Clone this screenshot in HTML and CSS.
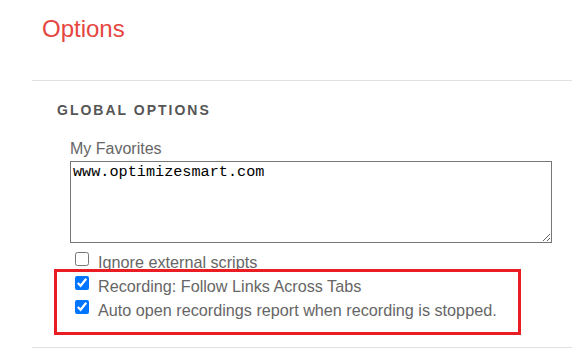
FILE: index.html
```html
<!DOCTYPE html>
<html>
<head>
<meta charset="utf-8">
<link rel="stylesheet" href="styles.css">
</head>
<body>
<div class="page">
  <h1 class="title">Options</h1>
  <div class="panel">
    <h2 class="section-title">GLOBAL OPTIONS</h2>
    <div class="field">
      <label class="field-label" for="fav">My Favorites</label>
      <textarea id="fav" class="favs">www.optimizesmart.com</textarea>
      <label class="check-row"><input type="checkbox" class="check"><span>Ignore external scripts</span></label>
      <label class="check-row"><input type="checkbox" class="check" checked><span>Recording: Follow Links Across Tabs</span></label>
      <label class="check-row"><input type="checkbox" class="check" checked><span>Auto open recordings report when recording is stopped.</span></label>
    </div>
  </div>
  <div class="highlight"></div>
</div>
</body>
</html>
```

FILE: styles.css
```css
html, body {
  margin: 0;
  padding: 0;
  background: #fff;
}

.page {
  position: relative;
  width: 572px;
  height: 364px;
  overflow: hidden;
  font-family: "Liberation Sans", Arial, sans-serif;
}

.title {
  margin: 0;
  padding: 15px 0 0 42px;
  font-size: 24px;
  line-height: 28px;
  font-weight: normal;
  color: #e5463f;
  height: 65px;
  box-sizing: content-box;
}

.panel {
  margin-left: 32px;
  border-top: 1px solid #e0e0e0;
  border-bottom: 1px solid #e0e0e0;
  padding: 21px 0 25px 25px;
}

.section-title {
  margin: 0;
  font-size: 14px;
  line-height: 16px;
  font-weight: bold;
  letter-spacing: 2px;
  color: #555;
}

.field {
  padding: 22px 0 0 13px;
  display: flex;
  flex-direction: column;
  align-items: flex-start;
}

.field-label {
  font-size: 16px;
  line-height: 18px;
  color: #666;
}

.favs {
  display: block;
  margin: 3px 0 7px 0;
  width: 482px;
  height: 82px;
  box-sizing: border-box;
  border: 1px solid #767676;
  padding: 2px;
  font-family: "Liberation Mono", "Courier New", monospace;
  font-size: 15.2px;
  line-height: 17px;
  color: #000;
  resize: vertical;
}

.check-row {
  display: flex;
  align-items: flex-start;
  height: 24px;
  line-height: 24px;
  font-size: 16.2px;
  color: #666;
}

.check {
  width: 14px;
  height: 14px;
  margin: 2px 9px 0 5px;
  flex: none;
}

.highlight {
  position: absolute;
  left: 54px;
  top: 269px;
  width: 461px;
  height: 60px;
  border: 3px solid #ea1c24;
  pointer-events: none;
}
```
